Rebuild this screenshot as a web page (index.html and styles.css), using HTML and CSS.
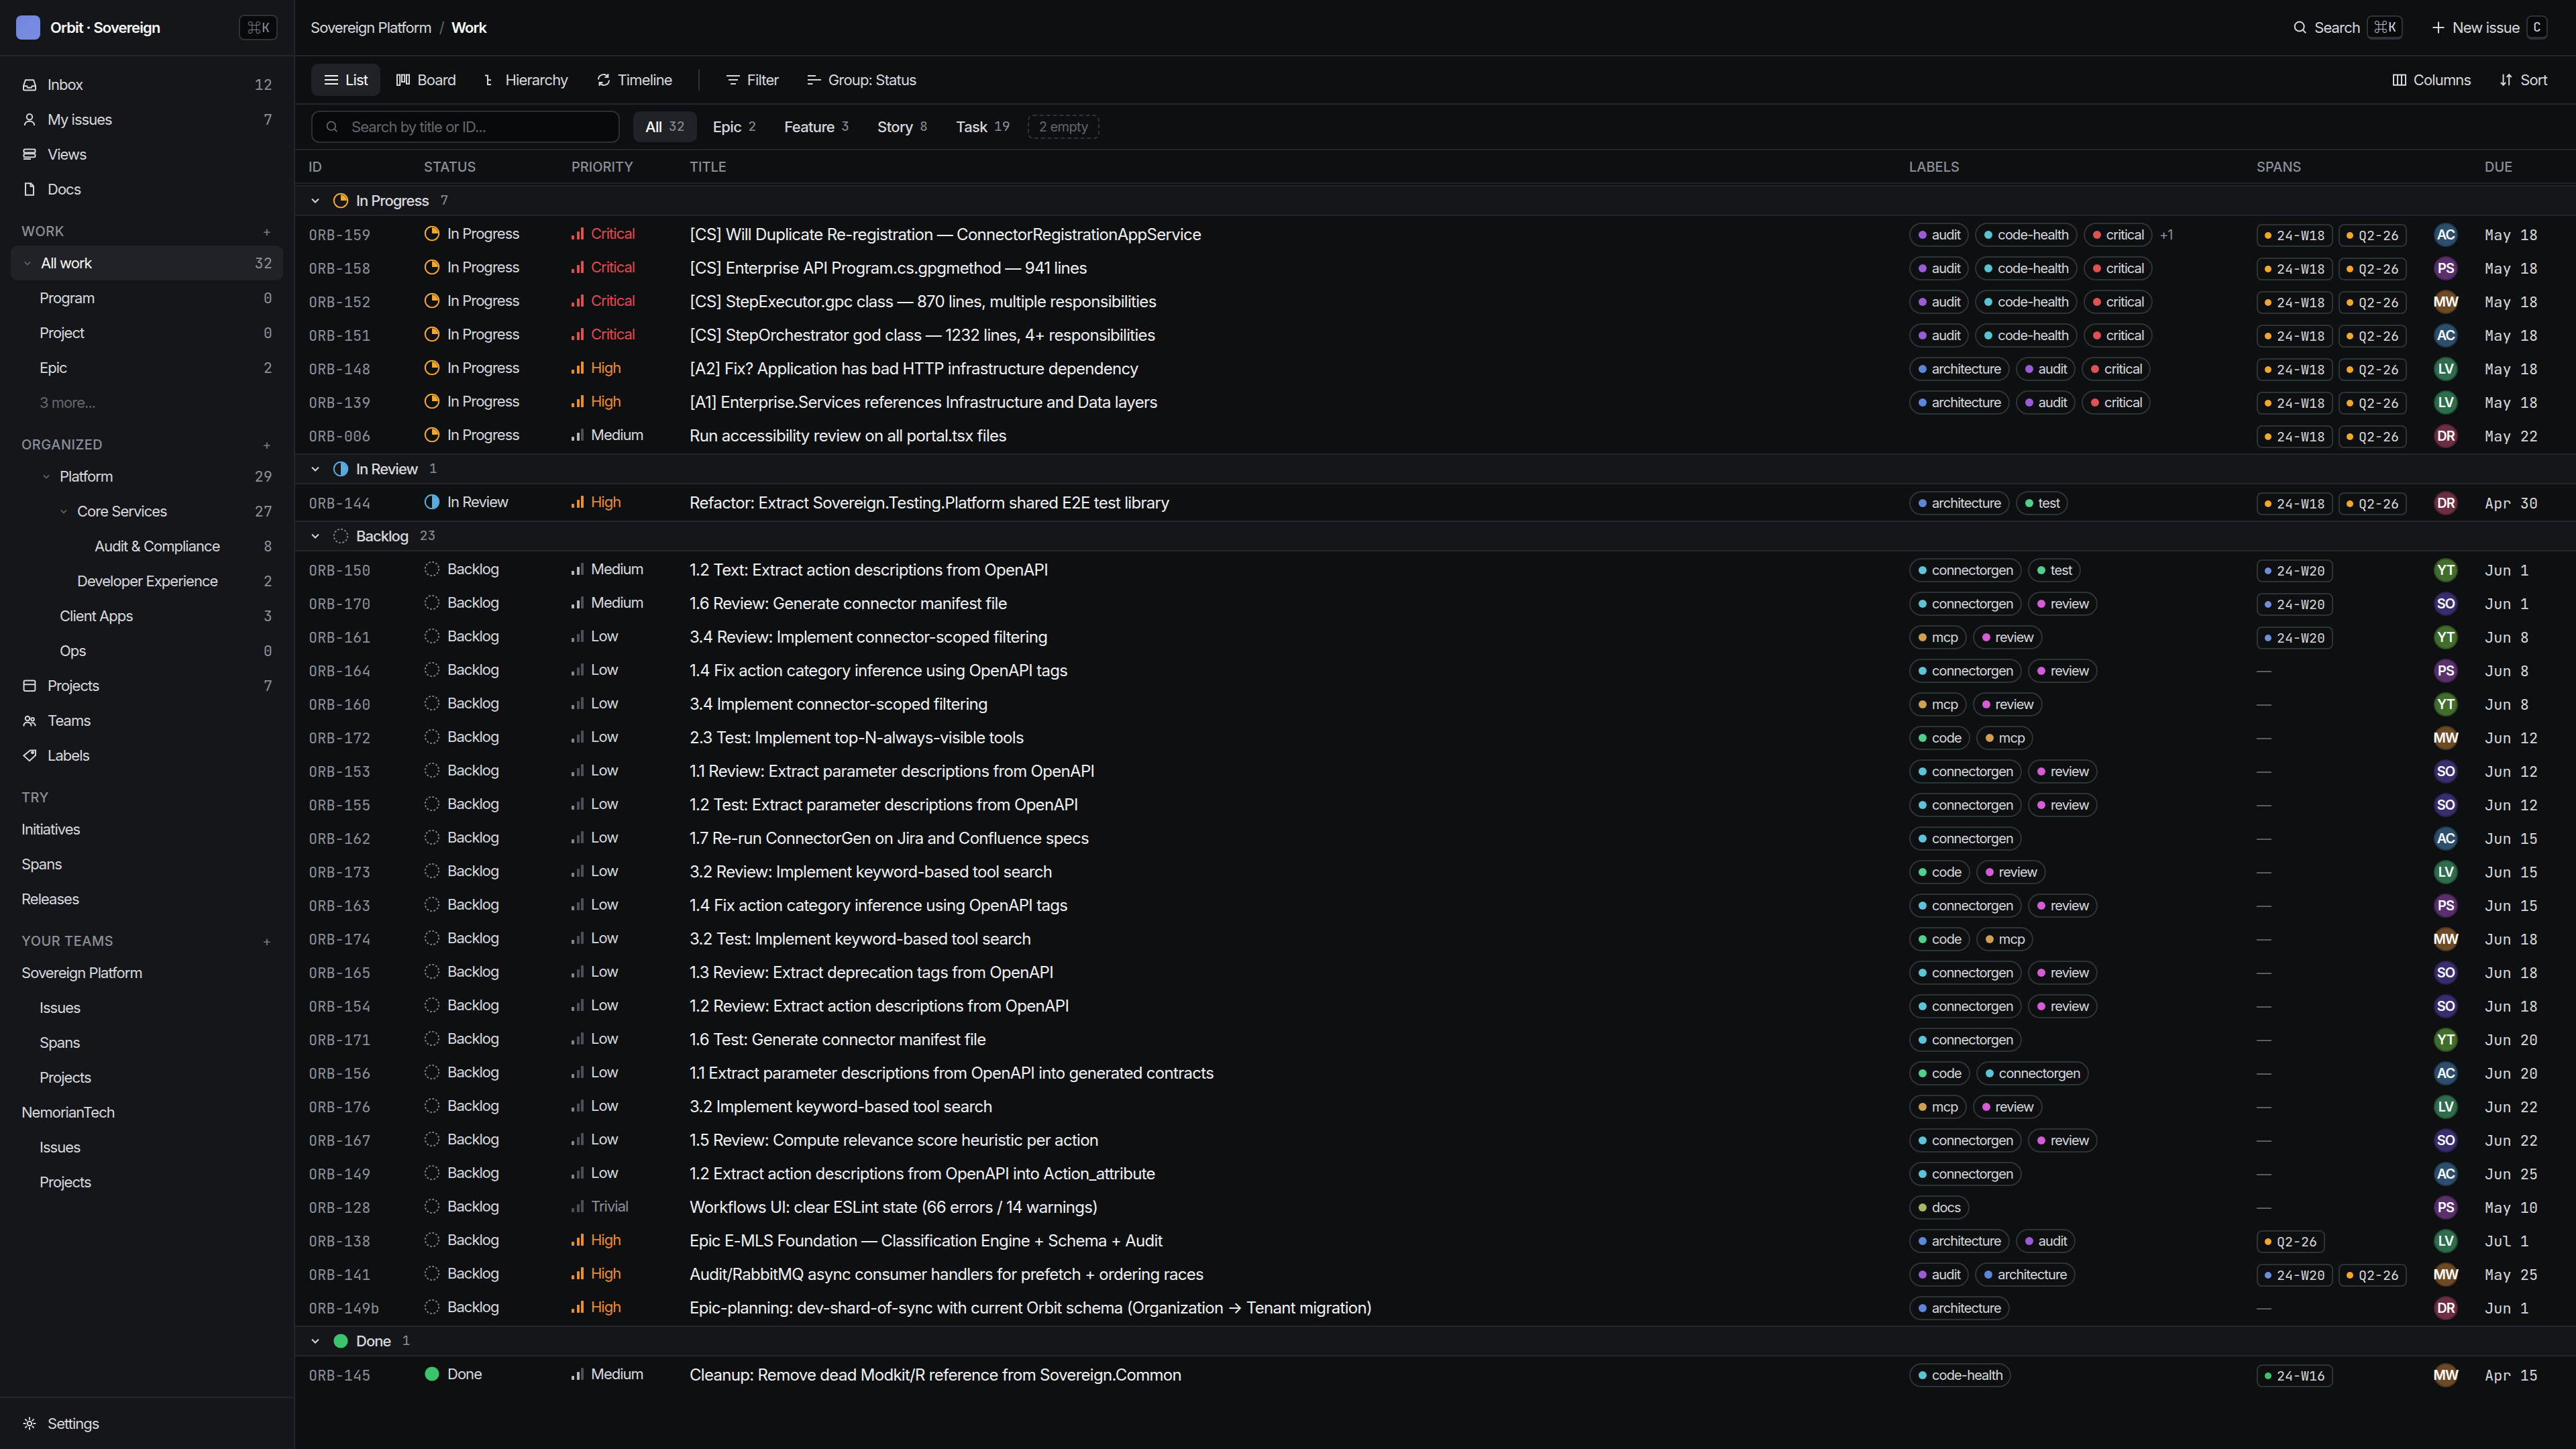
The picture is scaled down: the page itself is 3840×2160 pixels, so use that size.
FILE: index.html
```html
<!DOCTYPE html>
<html lang="en">
<head>
    <meta charset="UTF-8">
    <meta name="viewport" content="width=device-width, initial-scale=1.0">
    <title>Orbit · Sovereign</title>
    <link rel="stylesheet" href="styles.css">
</head>
<body>
    <!-- icon sprite -->
    <svg class="sprite" aria-hidden="true">
        <symbol id="i-inbox" viewBox="0 0 24 24"><path d="M6 5.2h12l3 9V19a1.5 1.5 0 0 1-1.5 1.5h-15A1.5 1.5 0 0 1 3 19v-4.8z"/><path d="M3 14.2h5l1.5 2.6h5l1.5-2.6h5"/></symbol>
        <symbol id="i-user" viewBox="0 0 24 24"><circle cx="12" cy="8.3" r="4.2"/><path d="M4.8 21c0-4 3-6.3 7.2-6.3s7.2 2.3 7.2 6.3"/></symbol>
        <symbol id="i-views" viewBox="0 0 24 24"><rect x="3.5" y="4.5" width="17" height="5" rx="1.6"/><rect x="3.5" y="11.2" width="17" height="5" rx="1.6"/><path d="M3 19h11"/></symbol>
        <symbol id="i-doc" viewBox="0 0 24 24"><path d="M6 3.3h8l4 4v13.4H6z"/><path d="M13.6 3.3v4.4H18"/></symbol>
        <symbol id="i-project" viewBox="0 0 24 24"><rect x="3.6" y="4.6" width="16.8" height="15.4" rx="2"/><path d="M3.6 10.3h16.8"/></symbol>
        <symbol id="i-team" viewBox="0 0 24 24"><circle cx="9" cy="9" r="3.2"/><circle cx="16.6" cy="10.3" r="2.3"/><path d="M3.4 20.6c0-3.7 2.3-5.8 5.6-5.8s5.6 2.1 5.6 5.8"/><path d="M14.6 15.6c3.4-1 6 1 6 4.6"/></symbol>
        <symbol id="i-tag" viewBox="0 0 24 24"><path d="M13 4.5h8v7.2l-9 8.5-8.6-7.8z"/><circle cx="16.5" cy="7.8" r="1.4" fill="currentColor"/></symbol>
        <symbol id="i-gear" viewBox="0 0 24 24"><circle cx="12" cy="12" r="3.2"/><path d="M12 2.6v4M12 17.4v4M2.6 12h4M17.4 12h4M5.4 5.4l2.8 2.8M15.8 15.8l2.8 2.8M5.4 18.6l2.8-2.8M15.8 8.2l2.8-2.8"/></symbol>
        <symbol id="i-chevron" viewBox="0 0 12 8"><path d="M1 1.5l5 5 5-5"/></symbol>
        <symbol id="i-search" viewBox="0 0 20 20"><circle cx="8.7" cy="8.6" r="7"/><path d="M13.7 13.6l4.6 4.6"/></symbol>
        <symbol id="i-plus" viewBox="0 0 20 20"><path d="M10 1.5v17M1.5 10h17"/></symbol>
        <symbol id="i-list" viewBox="0 0 20 20"><path d="M0 4h20M0 10h20M0 16h20"/></symbol>
        <symbol id="i-board" viewBox="0 0 20 20"><rect x="1" y="2.5" width="4.2" height="15.5"/><rect x="8" y="2.5" width="4.2" height="10.5"/><rect x="15" y="2.5" width="4" height="13.5"/></symbol>
        <symbol id="i-tree" viewBox="0 0 20 20"><path d="M1 3.5h4V17h5M5 10.2h5"/></symbol>
        <symbol id="i-cycle" viewBox="0 0 20 20"><path d="M2 9.5A7.6 7.6 0 0 1 16 5.6M16.4 1v5h-5M18 10.5A7.6 7.6 0 0 1 4 14.4M3.6 19v-5h5"/></symbol>
        <symbol id="i-filter" viewBox="0 0 20 20"><path d="M0 4h20M3 10h14M6 16h8"/></symbol>
        <symbol id="i-group" viewBox="0 0 20 20"><path d="M0 4h12M0 10h20M0 16h7.5"/></symbol>
        <symbol id="i-columns" viewBox="0 0 20 20"><rect x="1" y="2.6" width="18" height="15.2"/><path d="M7 2.6v15.2M13 2.6v15.2"/></symbol>
        <symbol id="i-sort" viewBox="0 0 20 20"><path d="M5.6 1.8v16M2 14l3.6 3.8L9.2 14M14.2 18.2v-16M10.6 6l3.6-3.8L17.8 6"/></symbol>
        <symbol id="s-progress" viewBox="0 0 24 24"><circle cx="12" cy="12" r="10.2"/><path d="M12 12V3.2A8.8 8.8 0 0 1 20.8 12z" fill="currentColor" stroke="none"/></symbol>
        <symbol id="s-review" viewBox="0 0 24 24"><circle cx="12" cy="12" r="10.2"/><path d="M12 2.6a9.4 9.4 0 0 1 0 18.8z" fill="currentColor" stroke="none"/></symbol>
        <symbol id="s-backlog" viewBox="0 0 24 24"><circle cx="12" cy="12" r="10.2" stroke-dasharray="2.8 2.54"/></symbol>
        <symbol id="s-done" viewBox="0 0 24 24"><circle cx="12" cy="12" r="10.6" fill="currentColor" stroke="none"/></symbol>
    </svg>

    <div class="app">
        <aside class="sidebar">
            <div class="brand">
                <span class="logo"></span>
                <span class="brand-name">Orbit · Sovereign</span>
                <kbd class="kbd"><span class="cmd">⌘</span>K</kbd>
            </div>
            <nav class="nav">
                <a class="item"><svg class="ico"><use href="#i-inbox"/></svg>Inbox<span class="count">12</span></a>
                <a class="item"><svg class="ico"><use href="#i-user"/></svg>My issues<span class="count">7</span></a>
                <a class="item"><svg class="ico"><use href="#i-views"/></svg>Views</a>
                <a class="item"><svg class="ico"><use href="#i-doc"/></svg>Docs</a>

                <div class="section">WORK<span class="add">+</span></div>
                <a class="item tree active"><svg class="chev"><use href="#i-chevron"/></svg>All work<span class="count">32</span></a>
                <a class="item sub">Program<span class="count">0</span></a>
                <a class="item sub">Project<span class="count">0</span></a>
                <a class="item sub">Epic<span class="count">2</span></a>
                <a class="item sub more">3 more...</a>

                <div class="section">ORGANIZED<span class="add">+</span></div>
                <a class="item tree d1"><svg class="chev"><use href="#i-chevron"/></svg>Platform<span class="count">29</span></a>
                <a class="item tree d2"><svg class="chev"><use href="#i-chevron"/></svg>Core Services<span class="count">27</span></a>
                <a class="item leaf3">Audit &amp; Compliance<span class="count">8</span></a>
                <a class="item leaf2">Developer Experience<span class="count">2</span></a>
                <a class="item leaf1">Client Apps<span class="count">3</span></a>
                <a class="item leaf1">Ops<span class="count">0</span></a>
                <a class="item"><svg class="ico"><use href="#i-project"/></svg>Projects<span class="count">7</span></a>
                <a class="item"><svg class="ico"><use href="#i-team"/></svg>Teams</a>
                <a class="item"><svg class="ico"><use href="#i-tag"/></svg>Labels</a>

                <div class="section">TRY</div>
                <a class="item">Initiatives</a>
                <a class="item">Spans</a>
                <a class="item">Releases</a>

                <div class="section">YOUR TEAMS<span class="add">+</span></div>
                <a class="item">Sovereign Platform</a>
                <a class="item sub">Issues</a>
                <a class="item sub">Spans</a>
                <a class="item sub">Projects</a>
                <a class="item">NemorianTech</a>
                <a class="item sub">Issues</a>
                <a class="item sub">Projects</a>
            </nav>
            <div class="side-foot">
                <a class="item"><svg class="ico"><use href="#i-gear"/></svg>Settings</a>
            </div>
        </aside>

        <main class="main">
            <header class="topbar">
                <span class="crumb">Sovereign Platform</span>
                <span class="slash">/</span>
                <span class="crumb-here">Work</span>
                <div class="right">
                    <button class="btn"><svg><use href="#i-search"/></svg>Search<kbd class="kbd key"><span class="cmd">⌘</span>K</kbd></button>
                    <button class="btn"><svg><use href="#i-plus"/></svg>New issue<kbd class="kbd key">C</kbd></button>
                </div>
            </header>

            <div class="toolbar">
                <button class="btn on"><svg><use href="#i-list"/></svg>List</button>
                <button class="btn"><svg><use href="#i-board"/></svg>Board</button>
                <button class="btn"><svg><use href="#i-tree"/></svg>Hierarchy</button>
                <button class="btn"><svg><use href="#i-cycle"/></svg>Timeline</button>
                <span class="divider"></span>
                <button class="btn"><svg><use href="#i-filter"/></svg>Filter</button>
                <button class="btn"><svg><use href="#i-group"/></svg>Group: Status</button>
                <div class="right">
                    <button class="btn"><svg><use href="#i-columns"/></svg>Columns</button>
                    <button class="btn"><svg><use href="#i-sort"/></svg>Sort</button>
                </div>
            </div>

            <div class="filters">
                <div class="search"><svg><use href="#i-search"/></svg>Search by title or ID...</div>
                <button class="tab on">All<span>32</span></button>
                <button class="tab">Epic<span>2</span></button>
                <button class="tab">Feature<span>3</span></button>
                <button class="tab">Story<span>8</span></button>
                <button class="tab">Task<span>19</span></button>
                <button class="empty">2 empty</button>
            </div>

            <div class="row head">
                <span>ID</span><span>STATUS</span><span>PRIORITY</span><span>TITLE</span><span>LABELS</span><span>SPANS</span><span></span><span>DUE</span>
            </div>
            <div id="list"></div>
        </main>
    </div>
    <script src="app.js"></script>
</body>
</html>
```
FILE: styles.css
```css
* {
    box-sizing: border-box;
}
body {
    margin: 0;
    background: #0d0f11;
    color: #d5d8dd;
    font-family: Inter, sans-serif;
    font-size: 22px;
    letter-spacing: -0.98px;
    line-height: 1.5;
}
svg {
    fill: none;
    stroke: currentColor;
    stroke-width: 2;
    flex: none;
}
.sprite {
    display: none;
}
.app {
    display: flex;
    height: 2160px;
}

/* sidebar */
.sidebar {
    width: 440px;
    flex: none;
    display: flex;
    flex-direction: column;
    background: #15161a;
    border-right: 2px solid #23252a;
}
.brand {
    display: flex;
    align-items: center;
    height: 84px;
    padding: 0 24px;
    border-bottom: 2px solid #23252a;
}
.logo {
    width: 36px;
    height: 36px;
    border-radius: 8px;
    background: linear-gradient(135deg, #6f87dd, #7b8ce2);
}
.brand-name {
    margin-left: 15px;
    color: #f7f8f8;
    font-weight: 600;
    letter-spacing: -0.87px;
}
.kbd {
    display: flex;
    align-items: center;
    justify-content: center;
    height: 38px;
    padding: 0 10px;
    margin-left: auto;
    border: 2px solid #2e3239;
    border-radius: 8px;
    background: #08090b;
    color: #8a8f98;
    font-family: "JetBrains Mono", "DejaVu Sans Mono", monospace;
    font-size: 20px;
    letter-spacing: 0;
    line-height: 1;
}
.cmd {
    width: 22px;
    font-family: "Noto Sans CJK SC", sans-serif;
    text-align: center;
}
.kbd.key {
    height: 36px;
    padding: 0 8px;
    margin-left: 0;
    border-bottom-width: 4px;
    color: #d5d8dd;
}
.nav {
    flex: 1;
    padding: 16px 16px 0;
}
.item {
    display: flex;
    align-items: center;
    height: 52px;
    padding: 0 16px;
    border-radius: 10px;
}
.item.active {
    background: #212227;
    color: #f7f8f8;
}
.ico {
    width: 24px;
    height: 24px;
    margin-right: 15px;
}
.chev {
    width: 10px;
    height: 7px;
    margin: 0 15px 0 4px;
    color: #62666d;
}
.count {
    margin-left: auto;
    color: #8a8f98;
    font-family: "JetBrains Mono", "DejaVu Sans Mono", monospace;
    letter-spacing: 0;
}
.sub { padding-left: 43px; }
.d1 { padding-left: 44px; }
.d2 { padding-left: 70px; }
.leaf1 { padding-left: 73px; }
.leaf2 { padding-left: 99px; }
.leaf3 { padding-left: 125px; }
.more { color: #62666d; }
.section {
    display: flex;
    align-items: center;
    justify-content: space-between;
    height: 58px;
    padding: 16px 16px 0;
    color: #8a8f98;
    font-size: 20px;
    font-weight: 500;
    letter-spacing: 0.5px;
}
.add {
    margin-right: 1px;
    color: #777b84;
    font-weight: 400;
}
.side-foot {
    padding: 12px 16px;
    border-top: 2px solid #23252a;
}

/* top bars */
.main {
    flex: 1;
    min-width: 0;
}
.topbar,
.toolbar,
.filters {
    display: flex;
    align-items: center;
    padding: 0 24px;
    border-bottom: 2px solid #23252a;
}
.topbar {
    height: 84px;
}
.toolbar {
    height: 72px;
    gap: 4px;
}
.filters {
    height: 68px;
    gap: 6px;
}
.crumb {
    margin-left: -1px;
}
.slash {
    margin: 0 12px;
    color: #62666d;
}
.crumb-here {
    margin-left: -1px;
    color: #f7f8f8;
    font-weight: 600;
}
.right {
    display: flex;
    gap: 4px;
    margin-left: auto;
}
.btn {
    display: flex;
    align-items: center;
    height: 48px;
    padding: 0 19px 0 20px;
    border: 0;
    border-radius: 10px;
    background: none;
    color: #d5d8dd;
    font: inherit;
    letter-spacing: -0.85px;
}
.btn svg {
    width: 20px;
    height: 20px;
    margin-right: 11px;
}
.btn .kbd {
    margin-left: 10px;
}
.topbar .right {
    margin-right: -1px;
}
.btn.on,
.tab.on {
    background: #212227;
    color: #f7f8f8;
}
.divider {
    width: 2px;
    height: 32px;
    margin: 0 16px;
    background: #2e3239;
}
.search {
    display: flex;
    align-items: center;
    width: 460px;
    height: 48px;
    margin-right: 14px;
    padding: 0 20px;
    border: 2px solid #2b3038;
    border-radius: 12px;
    background: #08090b;
    color: #62666d;
    letter-spacing: -0.92px;
}
.search svg {
    width: 18px;
    height: 18px;
    margin-right: 20px;
}
.tab {
    display: flex;
    align-items: center;
    height: 46px;
    padding: 1px 18px 0;
    border: 0;
    border-radius: 10px;
    background: none;
    color: #d5d8dd;
    font: inherit;
    font-weight: 500;
    letter-spacing: -0.66px;
}
.tab span {
    margin: -3px 0 0 10px;
    color: #8a8f98;
    font-family: "JetBrains Mono", "DejaVu Sans Mono", monospace;
    font-size: 20px;
    font-weight: 400;
    letter-spacing: 0;
}
.empty {
    height: 36px;
    margin-left: 2px;
    padding: 0 15px;
    border: 2px dashed #2e3239;
    border-radius: 8px;
    background: none;
    color: #62666d;
    font: inherit;
    font-size: 20px;
    letter-spacing: -0.6px;
}

/* issue table */
.row {
    display: grid;
    grid-template-columns: 172px 220px 176px 1818px 518px 264px 76px 1fr;
    align-items: center;
    height: 50px;
    padding: 6px 0 0 20px;
}
.head {
    padding-top: 2px;
    border-bottom: 2px solid #23252a;
    color: #8a8f98;
    font-size: 20px;
    font-weight: 500;
    letter-spacing: 0;
}
.group {
    display: flex;
    align-items: center;
    height: 46px;
    margin-top: 4px;
    padding-left: 24px;
    border-top: 2px solid #23252a;
    border-bottom: 2px solid #23252a;
    background: #15161a;
    font-weight: 500;
}
.group:first-child {
    margin-top: 2px;
}
.group .chev {
    width: 12px;
    height: 8px;
    margin: 0 20px 0 0;
    color: #d5d8dd;
}
.group .n {
    margin: -2px 0 0 17px;
    color: #8a8f98;
    font-family: "JetBrains Mono", "DejaVu Sans Mono", monospace;
    font-size: 20px;
    font-weight: 400;
    letter-spacing: 0;
}
.st {
    width: 24px;
    height: 24px;
    margin-right: 11px;
}
.progress { color: #f5a72c; }
.review { color: #5aaade; }
.backlog { color: #7d818a; }
.done { color: #3cc46c; }
.id,
.due {
    font-family: "JetBrains Mono", "DejaVu Sans Mono", monospace;
    letter-spacing: 0;
}
.id {
    color: #8a8f98;
}
.status,
.prio {
    display: flex;
    align-items: center;
    margin-top: -4px;
}
.title {
    color: #f0f1f3;
    font-size: 24px;
    letter-spacing: -0.7px;
    white-space: nowrap;
}
.bars {
    width: 18px;
    height: 18px;
    margin-right: 11px;
    fill: #4b5058;
    stroke: none;
}
.critical { color: #e5484d; }
.high { color: #ee8d2c; }
.trivial { color: #8a8f98; }
.critical .bars { fill: #dc5050; }
.high .bars { fill: #e98f2e; }
.medium rect:nth-child(-n+2) { fill: #b6b9bf; }
.low rect:first-child { fill: #858990; }
.labels,
.spans {
    display: flex;
    align-items: center;
}
.labels {
    gap: 9px;
}
.spans {
    gap: 8px;
}
.label {
    display: flex;
    align-items: center;
    height: 36px;
    padding: 0 11px 0 12px;
    border: 2px solid #2e3239;
    border-radius: 18px;
    font-size: 20px;
    letter-spacing: -0.87px;
}
.label i,
.span i {
    width: 12px;
    height: 12px;
    margin-right: 8px;
    border-radius: 50%;
}
.extra {
    margin-left: 1px;
    color: #8a8f98;
    font-size: 20px;
}
.span {
    display: flex;
    align-items: center;
    height: 34px;
    margin-top: 2px;
    padding: 0 10px;
    border: 2px solid #2e3239;
    border-radius: 8px;
    font-family: "JetBrains Mono", "DejaVu Sans Mono", monospace;
    font-size: 20px;
    letter-spacing: 0;
}
.span i {
    width: 10px;
    height: 10px;
}
.none {
    color: #62666d;
}
.avatar {
    display: flex;
    align-items: center;
    justify-content: center;
    width: 36px;
    height: 36px;
    border: 2px solid rgba(0, 0, 0, 0.25);
    border-radius: 50%;
    color: #fff;
    font-size: 20px;
    font-weight: 600;
}

/* dot colours */
.c-audit { background: #9b5bd6; }
.c-code-health { background: #56c5cf; }
.c-critical { background: #dd5252; }
.c-architecture { background: #5b87d9; }
.c-test { background: #4fd08c; }
.c-connectorgen { background: #5bc4d6; }
.c-review { background: #d65bd6; }
.c-mcp { background: #d0a050; }
.c-code { background: #4fd08c; }
.c-docs { background: #a9b665; }
.c-active { background: #f5a72c; }
.c-next { background: #6f8ddd; }
.c-closed { background: #3cc46c; }

.a-AC { background: #2d4f6e; }
.a-PS { background: #5b2f6d; }
.a-MW { background: #6d4a26; }
.a-LV { background: #2d6d4c; }
.a-DR { background: #6d2d42; }
.a-YT { background: #416d2d; }
.a-SO { background: #392d6d; }
```
FILE: app.js
```js
const STATUS = { progress: 'In Progress', review: 'In Review', backlog: 'Backlog', done: 'Done' };
const SPAN_STATE = { '24-W18': 'active', 'Q2-26': 'active', '24-W20': 'next', '24-W16': 'closed' };

// id | priority | title | labels | spans | assignee | due
const ISSUES = {
    progress: [
        'ORB-159|Critical|[CS] Will Duplicate Re-registration — ConnectorRegistrationAppService|audit,code-health,critical,+1|24-W18,Q2-26|AC|May 18',
        'ORB-158|Critical|[CS] Enterprise API Program.cs.gpgmethod — 941 lines|audit,code-health,critical|24-W18,Q2-26|PS|May 18',
        'ORB-152|Critical|[CS] StepExecutor.gpc class — 870 lines, multiple responsibilities|audit,code-health,critical|24-W18,Q2-26|MW|May 18',
        'ORB-151|Critical|[CS] StepOrchestrator god class — 1232 lines, 4+ responsibilities|audit,code-health,critical|24-W18,Q2-26|AC|May 18',
        'ORB-148|High|[A2] Fix? Application has bad HTTP infrastructure dependency|architecture,audit,critical|24-W18,Q2-26|LV|May 18',
        'ORB-139|High|[A1] Enterprise.Services references Infrastructure and Data layers|architecture,audit,critical|24-W18,Q2-26|LV|May 18',
        'ORB-006|Medium|Run accessibility review on all portal.tsx files||24-W18,Q2-26|DR|May 22'
    ],
    review: [
        'ORB-144|High|Refactor: Extract Sovereign.Testing.Platform shared E2E test library|architecture,test|24-W18,Q2-26|DR|Apr 30'
    ],
    backlog: [
        'ORB-150|Medium|1.2 Text: Extract action descriptions from OpenAPI|connectorgen,test|24-W20|YT|Jun 1',
        'ORB-170|Medium|1.6 Review: Generate connector manifest file|connectorgen,review|24-W20|SO|Jun 1',
        'ORB-161|Low|3.4 Review: Implement connector-scoped filtering|mcp,review|24-W20|YT|Jun 8',
        'ORB-164|Low|1.4 Fix action category inference using OpenAPI tags|connectorgen,review||PS|Jun 8',
        'ORB-160|Low|3.4 Implement connector-scoped filtering|mcp,review||YT|Jun 8',
        'ORB-172|Low|2.3 Test: Implement top-N-always-visible tools|code,mcp||MW|Jun 12',
        'ORB-153|Low|1.1 Review: Extract parameter descriptions from OpenAPI|connectorgen,review||SO|Jun 12',
        'ORB-155|Low|1.2 Test: Extract parameter descriptions from OpenAPI|connectorgen,review||SO|Jun 12',
        'ORB-162|Low|1.7 Re-run ConnectorGen on Jira and Confluence specs|connectorgen||AC|Jun 15',
        'ORB-173|Low|3.2 Review: Implement keyword-based tool search|code,review||LV|Jun 15',
        'ORB-163|Low|1.4 Fix action category inference using OpenAPI tags|connectorgen,review||PS|Jun 15',
        'ORB-174|Low|3.2 Test: Implement keyword-based tool search|code,mcp||MW|Jun 18',
        'ORB-165|Low|1.3 Review: Extract deprecation tags from OpenAPI|connectorgen,review||SO|Jun 18',
        'ORB-154|Low|1.2 Review: Extract action descriptions from OpenAPI|connectorgen,review||SO|Jun 18',
        'ORB-171|Low|1.6 Test: Generate connector manifest file|connectorgen||YT|Jun 20',
        'ORB-156|Low|1.1 Extract parameter descriptions from OpenAPI into generated contracts|code,connectorgen||AC|Jun 20',
        'ORB-176|Low|3.2 Implement keyword-based tool search|mcp,review||LV|Jun 22',
        'ORB-167|Low|1.5 Review: Compute relevance score heuristic per action|connectorgen,review||SO|Jun 22',
        'ORB-149|Low|1.2 Extract action descriptions from OpenAPI into Action_attribute|connectorgen||AC|Jun 25',
        'ORB-128|Trivial|Workflows UI: clear ESLint state (66 errors / 14 warnings)|docs||PS|May 10',
        'ORB-138|High|Epic E-MLS Foundation — Classification Engine + Schema + Audit|architecture,audit|Q2-26|LV|Jul 1',
        'ORB-141|High|Audit/RabbitMQ async consumer handlers for prefetch + ordering races|audit,architecture|24-W20,Q2-26|MW|May 25',
        'ORB-149b|High|Epic-planning: dev-shard-of-sync with current Orbit schema (Organization → Tenant migration)|architecture||DR|Jun 1'
    ],
    done: [
        'ORB-145|Medium|Cleanup: Remove dead Modkit/R reference from Sovereign.Common|code-health|24-W16|MW|Apr 15'
    ]
};

const bars = '<svg class="bars" viewBox="0 0 18 18"><rect y="12" width="4" height="6" rx="1"/><rect x="8" y="6" width="4" height="12" rx="1"/><rect x="14" width="4" height="18" rx="1"/></svg>';

function split(list) {
    return list ? list.split(',') : [];
}

function statusIcon(key) {
    return `<svg class="st ${key}"><use href="#s-${key}"/></svg>`;
}

function label(name) {
    if (name[0] === '+') return `<span class="extra">${name}</span>`;
    return `<span class="label"><i class="c-${name}"></i>${name}</span>`;
}

function span(name) {
    return `<span class="span"><i class="c-${SPAN_STATE[name]}"></i>${name}</span>`;
}

function row(key, line) {
    const [id, prio, title, labels, spans, who, due] = line.split('|');
    return `<div class="row">
        <span class="id">${id}</span>
        <span class="status">${statusIcon(key)}${STATUS[key]}</span>
        <span class="prio ${prio.toLowerCase()}">${bars}${prio}</span>
        <span class="title">${title}</span>
        <span class="labels">${split(labels).map(label).join('')}</span>
        <span class="spans">${split(spans).map(span).join('') || '<span class="none">—</span>'}</span>
        <span class="avatar a-${who}">${who}</span>
        <span class="due">${due}</span>
    </div>`;
}

document.getElementById('list').innerHTML = Object.keys(ISSUES).map(key =>
    `<div class="group"><svg class="chev"><use href="#i-chevron"/></svg>${statusIcon(key)}${STATUS[key]}<span class="n">${ISSUES[key].length}</span></div>` +
    ISSUES[key].map(line => row(key, line)).join('')
).join('');
```
